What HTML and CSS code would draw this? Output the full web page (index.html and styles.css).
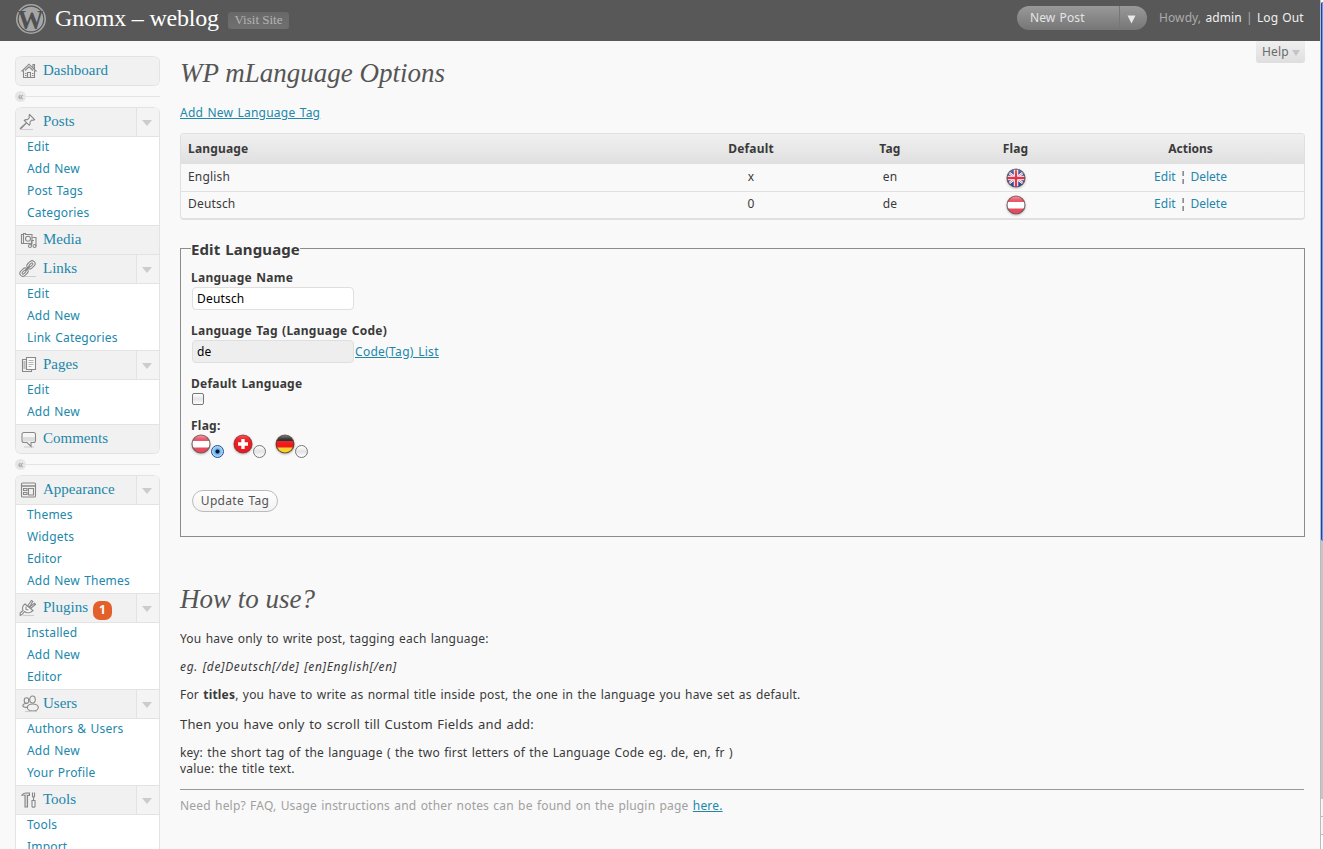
FILE: index.html
```
<!DOCTYPE html>
<html lang="en">
<head>
    <meta charset="utf-8">
    <title>WP mLanguage Options</title>
    <link rel="stylesheet" href="styles.css">
</head>
<body>
<svg class="defs" width="0" height="0">
    <defs>
        <linearGradient id="shine" x1="0" y1="0" x2="0" y2="1">
            <stop offset="0" stop-color="#fff" stop-opacity=".55"/>
            <stop offset=".5" stop-color="#fff" stop-opacity=".1"/>
            <stop offset="1" stop-color="#fff" stop-opacity="0"/>
        </linearGradient>
        <clipPath id="round"><circle cx="10" cy="10" r="9"/></clipPath>
        <symbol id="flag-at" viewBox="0 0 20 20">
            <g clip-path="url(#round)">
                <rect width="20" height="20" fill="#e84a5e"/>
                <rect y="7" width="20" height="6.5" fill="#fff"/>
                <rect width="20" height="10" fill="url(#shine)"/>
            </g>
            <circle cx="10" cy="10" r="9" fill="none" stroke="#5c4a4a" stroke-opacity=".75" stroke-width="1.2"/>
        </symbol>
        <symbol id="flag-ch" viewBox="0 0 20 20">
            <g clip-path="url(#round)">
                <rect width="20" height="20" fill="#ee1a22"/>
                <path d="M8.3 5h3.4v3.3H15v3.4h-3.300V15H8.300v-3.300H5V8.300h3.300z" fill="#fff"/>
                <rect width="20" height="10" fill="url(#shine)" opacity=".6"/>
            </g>
            <circle cx="10" cy="10" r="9" fill="none" stroke="#8a2a2a" stroke-opacity=".75" stroke-width="1.2"/>
        </symbol>
        <symbol id="flag-de" viewBox="0 0 20 20">
            <g clip-path="url(#round)">
                <rect width="20" height="20" fill="#222"/>
                <rect y="7" width="20" height="7" fill="#ee1a1c"/>
                <rect y="13.5" width="20" height="7" fill="#fbd02c"/>
                <rect width="20" height="10" fill="url(#shine)"/>
            </g>
            <circle cx="10" cy="10" r="9" fill="none" stroke="#54402c" stroke-opacity=".75" stroke-width="1.2"/>
        </symbol>
        <symbol id="flag-gb" viewBox="0 0 20 20">
            <g clip-path="url(#round)">
                <rect width="20" height="20" fill="#2a4c9c"/>
                <path d="M2 4l16 12M18 4L2 16" stroke="#fff" stroke-width="2.4"/>
                <path d="M2 4l16 12M18 4L2 16" stroke="#dc3546" stroke-width=".7"/>
                <path d="M10 0v20M0 10h20" stroke="#fff" stroke-width="4.4"/>
                <path d="M10 0v20M0 10h20" stroke="#e0344a" stroke-width="2.4"/>
                <rect width="20" height="10" fill="url(#shine)" opacity=".7"/>
            </g>
            <circle cx="10" cy="10" r="9" fill="none" stroke="#4a4650" stroke-opacity=".75" stroke-width="1.2"/>
        </symbol>
    </defs>
</svg>

<div class="window">
<div class="page">
    <header class="header">
        <svg class="logo" viewBox="0 0 32 32">
            <circle cx="16" cy="16" r="14.2" fill="#505050" stroke="#a6a6a6" stroke-width="1.6"/>
            <circle cx="16" cy="16" r="12.300" fill="#a6a6a6"/>
            <text x="15.500" y="25.500" text-anchor="middle" textLength="26" lengthAdjust="spacingAndGlyphs">W</text>
        </svg>
        <h1>Gnomx – weblog</h1>
        <a class="visit">Visit Site</a>
        <div class="favorite">
            <span class="favorite-name">New Post</span>
            <span class="favorite-toggle"><svg width="9" height="9"><path d="M.5.5h8L4.500 8.500z" fill="#e8e8e8"/></svg></span>
        </div>
        <p class="user">Howdy, <a>admin</a> | <a>Log Out</a></p>
    </header>

    <div class="body">
        <nav class="sidebar">
            <div class="menu">
                <div class="head">
                    <svg class="icon" viewBox="0 0 18 18"><path d="M1.500 9.500L9 2.200l7.500 7.300M3.500 8.500v7h11v-7M5 8.500L9 4.800l4 3.700M13 5.500v-3h1.500V7" /><path d="M7.500 15.500v-5h3v5M5 11.500h1.500M5 13.500h1.500M12 11.500h1.500M12 13.500h1.500"/></svg>
                    <a>Dashboard</a>
                </div>
            </div>
            <div class="separator"><span>«</span></div>
            <div class="menu">
                <div class="head">
                    <svg class="icon icon-left" viewBox="0 0 18 18"><path d="M10.500 1.500l5 5c-1 1-2 .8-2.800.6L11 9c.4 1.500.2 2.500-.7 3.300L5.300 7.500c1-1 2-1 3-.7l2-1.900C9.900 3.600 9.800 2.500 10.500 1.500zM7.300 10L2.500 15l-1.500 1 1-1.500z" fill="#f8f8f8"/><path class="shade" d="M1 16.500h13"/></svg>
                    <a>Posts</a><span class="toggle"></span>
                </div>
                <ul>
                    <li>Edit</li>
                    <li>Add New</li>
                    <li>Post Tags</li>
                    <li>Categories</li>
                </ul>
                <div class="head">
                    <svg class="icon" viewBox="0 0 18 18"><path d="M1.500 3.500h2v-1h2v1h6.500v9h-10.500zM3.500 3.500v9"/><circle cx="8" cy="7.800" r="2.500"/><path d="M12.500 6.500h3.500v9M11.500 9.500V15M11.500 9.500h2.500"/><circle cx="10" cy="15" r="1.500"/><circle cx="14.500" cy="15" r="1.500"/></svg>
                    <a>Media</a>
                </div>
                <div class="head">
                    <svg class="icon icon-left" viewBox="0 0 18 18"><path class="shade" d="M5 16.500h12"/><g fill="#f8f8f8"><rect x="-4.500" y="-3" width="9" height="6" rx="3" transform="translate(12 4.800) rotate(-45)"/><rect x="-2.300" y="-1" width="4.600" height="2" rx="1" transform="translate(12 4.800) rotate(-45)"/><rect x="-4.500" y="-3" width="9" height="6" rx="3" transform="translate(5 12.200) rotate(-45)"/><rect x="-2.300" y="-1" width="4.600" height="2" rx="1" transform="translate(5 12.200) rotate(-45)"/></g><path d="M6.500 10.500l4-4" stroke-width="2"/></svg>
                    <a>Links</a><span class="toggle"></span>
                </div>
                <ul>
                    <li>Edit</li>
                    <li>Add New</li>
                    <li>Link Categories</li>
                </ul>
                <div class="head">
                    <svg class="icon" viewBox="0 0 18 18"><path d="M6.500 3.500h-4v12h9v-1.500M3.500 6h2M3.500 8h2M3.500 10h2M3.500 12h2" /><path d="M6.500 1.500h9v12h-9z" fill="#fafafa"/><path d="M8.500 4.500h5M8.500 6.500h5M8.500 8.500h5M8.500 10.500h3" stroke-width=".6"/></svg>
                    <a>Pages</a><span class="toggle"></span>
                </div>
                <ul>
                    <li>Edit</li>
                    <li>Add New</li>
                </ul>
                <div class="head">
                    <svg class="icon" viewBox="0 0 18 18"><path class="shade" d="M4 17h10"/><path d="M4 2.500h9.500q2 0 2 2v6q0 2-2 2h-2.500v4l-4-4H4q-2 0-2-2v-6q0-2 2-2z" fill="#f6f6f6"/><path d="M3 7h12v3.500q0 1-1 1H4q-1 0-1-1z" fill="#ddd" stroke="none"/></svg>
                    <a>Comments</a>
                </div>
            </div>
            <div class="separator"><span>«</span></div>
            <div class="menu">
                <div class="head">
                    <svg class="icon" viewBox="0 0 18 18"><rect x="1.500" y="2" width="14" height="14" rx="1"/><path d="M2 5h13" stroke-width="1.500"/><path d="M3.500 7.500h3.500v2H3.500zM3.500 11.500h3.500v2H3.500zM8.500 7.500h5v6.500h-5z"/></svg>
                    <a>Appearance</a><span class="toggle"></span>
                </div>
                <ul>
                    <li>Themes</li>
                    <li>Widgets</li>
                    <li>Editor</li>
                    <li>Add New Themes</li>
                </ul>
                <div class="head">
                    <svg class="icon icon-left" viewBox="0 0 18 18"><path class="shade" d="M4 16.500h11"/><path d="M8.500 7L12.500 1.500l1.300.9L10.800 7.500zM11.500 9.500L16.500 5.500l-.9-1.200L10.500 8z" fill="#f8f8f8"/><path d="M6 5l8 6.500c-2.500 2.500-6 3-8.500 1L3 15.500l-1.800.8V14L4 11.500C3 9 3.800 6.500 6 5z" fill="#f8f8f8"/><path d="M7 7.500v3l2.500.5" /></svg>
                    <a>Plugins</a><span class="count">1</span><span class="toggle"></span>
                </div>
                <ul>
                    <li>Installed</li>
                    <li>Add New</li>
                    <li>Editor</li>
                </ul>
                <div class="head">
                    <svg class="icon icon-users" viewBox="0 0 18 18"><ellipse cx="4.500" cy="5.500" rx="2.300" ry="2.800"/><path d="M5 8.500c-3-.3-4.500 1-4 2.800.5 1.200 2 1.300 4.500 1"/><ellipse cx="10.500" cy="4.500" rx="2.800" ry="3.500" fill="#f1f1f1"/><ellipse cx="10.800" cy="12.500" rx="5.500" ry="3.500" fill="#f1f1f1"/><path class="shade" d="M3 16.500h12"/></svg>
                    <a>Users</a><span class="toggle"></span>
                </div>
                <ul>
                    <li>Authors &amp; Users</li>
                    <li>Add New</li>
                    <li>Your Profile</li>
                </ul>
                <div class="head">
                    <svg class="icon" viewBox="0 0 18 18"><path d="M1.500 4.500q2-3 5-2.500h3v2.500h-2v11.500h-2.500V4.500q-2-1-3.500 0z" fill="#d8d8d8"/><path d="M12.500 1.500v4l1 1v3M14.500 1.500v4l-1 1M12 9.500h3v6q-1.500 1.500-3 0z" fill="#f4f4f4"/></svg>
                    <a>Tools</a><span class="toggle"></span>
                </div>
                <ul>
                    <li>Tools</li>
                    <li>Import</li>
                </ul>
            </div>
        </nav>

        <main class="content">
            <div class="help">Help <span></span></div>
            <h2>WP mLanguage Options</h2>
            <p class="add"><a>Add New Language Tag</a></p>

            <table class="languages">
                <thead>
                    <tr>
                        <th class="col-name">Language</th>
                        <th class="col-default">Default</th>
                        <th class="col-tag">Tag</th>
                        <th class="col-flag">Flag</th>
                        <th class="col-actions">Actions</th>
                    </tr>
                </thead>
                <tbody>
                    <tr>
                        <td>English</td>
                        <td>x</td>
                        <td>en</td>
                        <td><svg class="flag"><use href="#flag-gb"/></svg></td>
                        <td><a>Edit</a> ¦ <a>Delete</a></td>
                    </tr>
                    <tr>
                        <td>Deutsch</td>
                        <td>0</td>
                        <td>de</td>
                        <td><svg class="flag"><use href="#flag-at"/></svg></td>
                        <td><a>Edit</a> ¦ <a>Delete</a></td>
                    </tr>
                </tbody>
            </table>

            <fieldset>
                <legend>Edit Language</legend>
                <div class="field">
                    <label>Language Name</label>
                    <input type="text" value="Deutsch">
                </div>
                <div class="field">
                    <label>Language Tag (Language Code)</label>
                    <div class="inline"><input type="text" class="readonly" value="de" readonly><a>Code(Tag) List</a></div>
                </div>
                <div class="field field-default">
                    <label>Default Language</label>
                    <input type="checkbox">
                </div>
                <div class="field field-flag">
                    <label>Flag:</label>
                    <div class="flags">
                        <svg class="flag"><use href="#flag-at"/></svg><input type="radio" name="flag" checked>
                        <svg class="flag"><use href="#flag-ch"/></svg><input type="radio" name="flag">
                        <svg class="flag"><use href="#flag-de"/></svg><input type="radio" name="flag">
                    </div>
                </div>
                <button type="button">Update Tag</button>
            </fieldset>

            <h2 class="howto">How to use?</h2>
            <p>You have only to write post, tagging each language:</p>
            <p><em>eg. [de]Deutsch[/de] [en]English[/en]</em></p>
            <p>For <strong>titles</strong>, you have to write as normal title inside post, the one in the language you have set as default.</p>
            <p class="large">Then you have only to scroll till Custom Fields and add:</p>
            <p>key: the short tag of the language ( the two first letters of the Language Code eg. de, en, fr )<br>value: the title text.</p>
            <hr>
            <p class="note">Need help? FAQ, Usage instructions and other notes can be found on the plugin page <a>here.</a></p>
        </main>
    </div>
</div>
<div class="scrollbar">
    <div class="thumb"></div>
    <div class="track"></div>
    <div class="arrow"></div>
    <div class="arrow"></div>
    <div class="corner"></div>
</div>
</div>
</body>
</html>
```
FILE: styles.css
```
* {
    box-sizing: border-box;
}

body {
    margin: 0;
    background: #f9f9f9;
    color: #3a3a3a;
    font: 12px/16px "Noto Sans", "Open Sans", sans-serif;
    letter-spacing: 0.18px;
    word-spacing: 1px;
}

.defs {
    display: block;
}

h1, h2, p, ul, li {
    margin: 0;
    padding: 0;
    list-style: none;
    font-weight: normal;
}

a {
    color: #2187ab;
}

.window {
    display: flex;
    height: 849px;
    overflow: hidden;
}

.page {
    width: 1320px;
    flex: none;
}

/* header */
.header {
    height: 41px;
    display: flex;
    align-items: flex-start;
    padding: 0 16px 0 15px;
    background: #585858;
    color: #ababab;
}

.logo {
    width: 32px;
    height: 32px;
    margin-top: 3px;
}

.logo text {
    font: bold 28px "Liberation Serif", serif;
    letter-spacing: 0;
    fill: #505050;
}

.header h1 {
    width: 165px;
    margin: 4px 8px 0 8px;
    font: 24px/28px "Liberation Serif", serif;
    letter-spacing: -0.2px;
    word-spacing: 0;
    white-space: nowrap;
    color: #fff;
}

.visit {
    width: 61px;
    height: 17px;
    margin-top: 12px;
    border-radius: 3px;
    background: linear-gradient(#686868, #707070);
    font: 13px/16px "Liberation Serif", serif;
    letter-spacing: 0;
    word-spacing: 0;
    text-align: center;
    color: #b4b4b4;
}

.favorite {
    display: flex;
    width: 130px;
    height: 24px;
    margin: 6px 12px 0 auto;
    border-radius: 12px;
    background: linear-gradient(#999, #767676);
    line-height: 23px;
    color: #e4e4e4;
}

.favorite-name {
    width: 103px;
    padding-left: 13px;
    border-right: 1px solid #777;
    letter-spacing: 0.1px;
}

.favorite-toggle {
    display: flex;
    align-items: center;
    padding: 3px 0 0 7px;
}

.user {
    width: 145px;
    margin-top: 10px;
    white-space: nowrap;
    letter-spacing: 0.1px;
}

.user a {
    color: #f0f0f0;
}

.body {
    display: flex;
    padding-left: 15px;
}

/* menu */
.sidebar {
    width: 145px;
    margin: 15px 20px 0 0;
}

.menu {
    border: 1px solid #e3e3e3;
    border-top: 0;
    border-radius: 6px;
    overflow: hidden;
    background: #fff;
}

.head {
    display: flex;
    height: 29px;
    border-top: 1px solid #e3e3e3;
    background: #f1f1f1;
    font: 15px/27px "Liberation Serif", serif;
    letter-spacing: 0;
    word-spacing: 0;
}

.head:first-child {
    border-radius: 6px 6px 0 0;
}

.icon {
    width: 18px;
    height: 18px;
    margin: 5px 5px 0 4px;
    fill: none;
    stroke: #888;
    stroke-width: 1.1;
}

.icon-left {
    margin: 5px 6px 0 3px;
}

.icon-users {
    margin: 5px 3px 0 6px;
}

.icon .shade {
    stroke: #ccc;
}

.toggle {
    width: 23px;
    margin-left: auto;
    border-left: 1px solid #e3e3e3;
    background: #f4f4f4;
}

.toggle::before {
    content: "";
    display: block;
    margin: 12px 0 0 5px;
    width: 0;
    border: 5px solid transparent;
    border-top: 6px solid #ccc;
    border-bottom: 0;
}

.count {
    width: 19px;
    height: 19px;
    margin: 7px 0 0 5px;
    border-radius: 7px;
    background: #e4602a;
    color: #fff;
    font: bold 12px/17px "Noto Sans", sans-serif;
    text-align: center;
}

.menu ul {
    border-top: 1px solid #e3e3e3;
}

.menu li {
    height: 22px;
    padding-left: 11px;
    line-height: 20px;
    color: #2187ab;
}

.separator {
    display: flex;
    align-items: center;
    height: 21px;
}

.separator span {
    width: 11px;
    height: 11px;
    border-radius: 50%;
    background: #e6e6e6;
    font-size: 11px;
    line-height: 9px;
    letter-spacing: 0;
    text-align: center;
    color: #999;
}

.separator::after {
    content: "";
    flex: 1;
    height: 1px;
    background: #e3e3e3;
}

/* content */
.content {
    width: 1125px;
}

.help {
    width: 49px;
    height: 22px;
    margin-left: auto;
    border-radius: 0 0 3px 3px;
    background: linear-gradient(#efefef, #dedede);
    padding-left: 6px;
    line-height: 22px;
    white-space: nowrap;
    color: #6a6a6a;
}

.help span {
    display: inline-block;
    border: 4px solid transparent;
    border-top: 6px solid #c4c4c4;
    border-bottom: 0;
    margin-left: -1px;
}

h2 {
    margin-top: -5px;
    font: italic 27px/30px "Liberation Serif", serif;
    letter-spacing: 0;
    word-spacing: 0;
    color: #555;
}

.add {
    margin: 17px 0 12px;
    letter-spacing: 0.22px;
}

.add a, .inline a, .note a {
    text-decoration: underline;
}

.inline a {
    letter-spacing: 0.3px;
}

.languages {
    width: 1125px;
    table-layout: fixed;
    border: 1px solid #e0e0e0;
    border-bottom-width: 2px;
    border-radius: 4px;
    border-spacing: 0;
    overflow: hidden;
}

.languages th {
    height: 30px;
    padding: 0;
    background: linear-gradient(#f0f0f0, #e0e0e0);
    text-align: center;
}

.languages td {
    height: 27px;
    padding: 0 0 2px;
    text-align: center;
    line-height: 20px;
}

.languages tr + tr td {
    border-top: 1px solid #e0e0e0;
}

.languages tr > :first-child {
    padding-left: 7px;
    text-align: left;
}

.languages tr > :last-child {
    letter-spacing: 0;
}

.col-default {
    width: 150px;
}

.col-tag {
    width: 128px;
}

.col-flag {
    width: 123px;
}

.col-actions {
    width: 227px;
}

.flag {
    width: 20px;
    height: 20px;
    filter: drop-shadow(0 1px 1px rgba(0, 0, 0, 0.25));
}

.languages .flag {
    display: block;
    margin: 2px auto -2px;
    transform: translateY(-1px);
}

fieldset {
    height: 299px;
    margin: 18px 0 0;
    padding: 10px 10px 0;
    border: 1px solid #8c8c8c;
}

legend {
    height: 20px;
    padding: 0;
    font-weight: bold;
    font-size: 15px;
    line-height: 22px;
    letter-spacing: 0.1px;
    white-space: nowrap;
}

.field {
    height: 53px;
}

.field label {
    display: block;
    height: 19px;
    padding-top: 2px;
    font-weight: bold;
    letter-spacing: 0.24px;
}

input {
    font: inherit;
    letter-spacing: inherit;
    color: #000;
}

input[type="text"] {
    display: block;
    width: 162px;
    height: 23px;
    margin: 0 0 0 1px;
    padding: 0 4px;
    border: 1px solid #dfdfdf;
    border-radius: 4px;
    background: #fff;
}

input[type="text"].readonly {
    background: #eee;
}

.inline {
    display: flex;
    gap: 1px;
    line-height: 23px;
}

input[type="checkbox"], input[type="radio"] {
    appearance: none;
    width: 12px;
    height: 12px;
    margin: 0 0 0 1px;
    border: 1px solid #777;
    border-radius: 2px;
    background: linear-gradient(#fff, #e4e4e4 50%, #fff);
}

input[type="radio"] {
    width: 13px;
    height: 13px;
    margin: 11px 7px 0 0;
    border-radius: 50%;
}

input[type="radio"]:checked {
    border-color: #2a4a8c;
    background: radial-gradient(circle, #0a1a30 0 1.5px, #6ab0ee 2.5px, #bfe8ff 6px);
}

.field-default {
    height: 42px;
}

.field-default input {
    display: block;
}

.flags {
    display: flex;
    margin-top: -1px;
}

.flags input + .flag {
    margin-left: 2px;
}

button {
    display: block;
    width: 86px;
    height: 22px;
    margin: 21px 0 0 1px;
    padding: 0;
    border: 1px solid #bbb;
    border-radius: 11px;
    background: linear-gradient(#fff, #f2f2f2);
    font: inherit;
    letter-spacing: 0.3px;
    word-spacing: 1px;
    color: #555;
}

.howto {
    margin: 47px 0 17px;
}

.content p + p {
    margin-top: 12px;
}

em {
    letter-spacing: 0.64px;
}

.content p.large {
    margin-top: 14px;
    font-size: 13px;
    line-height: 15px;
}

.content .large + p {
    margin-top: 13px;
}

hr {
    height: 1px;
    width: 1124px;
    margin: 12px 0 8px;
    border: 0;
    background: #999;
}

.note {
    color: #a0a0a0;
}

/* window edge */
.scrollbar {
    display: flex;
    flex-direction: column;
    width: 3px;
    padding-top: 2px;
    border-left: 1px solid #bbb;
    background: #fff;
}

.thumb {
    height: 539px;
    border-left: 1px solid #0b49b8;
    border-radius: 3px 0 0 3px;
    background: #5c9df0;
}

.track {
    height: 258px;
    background: #c6c6c6;
}

.arrow {
    height: 18px;
    border-bottom: 1px solid #bbb;
    background: #f6f6f6;
}

.corner {
    flex: 1;
}
```
